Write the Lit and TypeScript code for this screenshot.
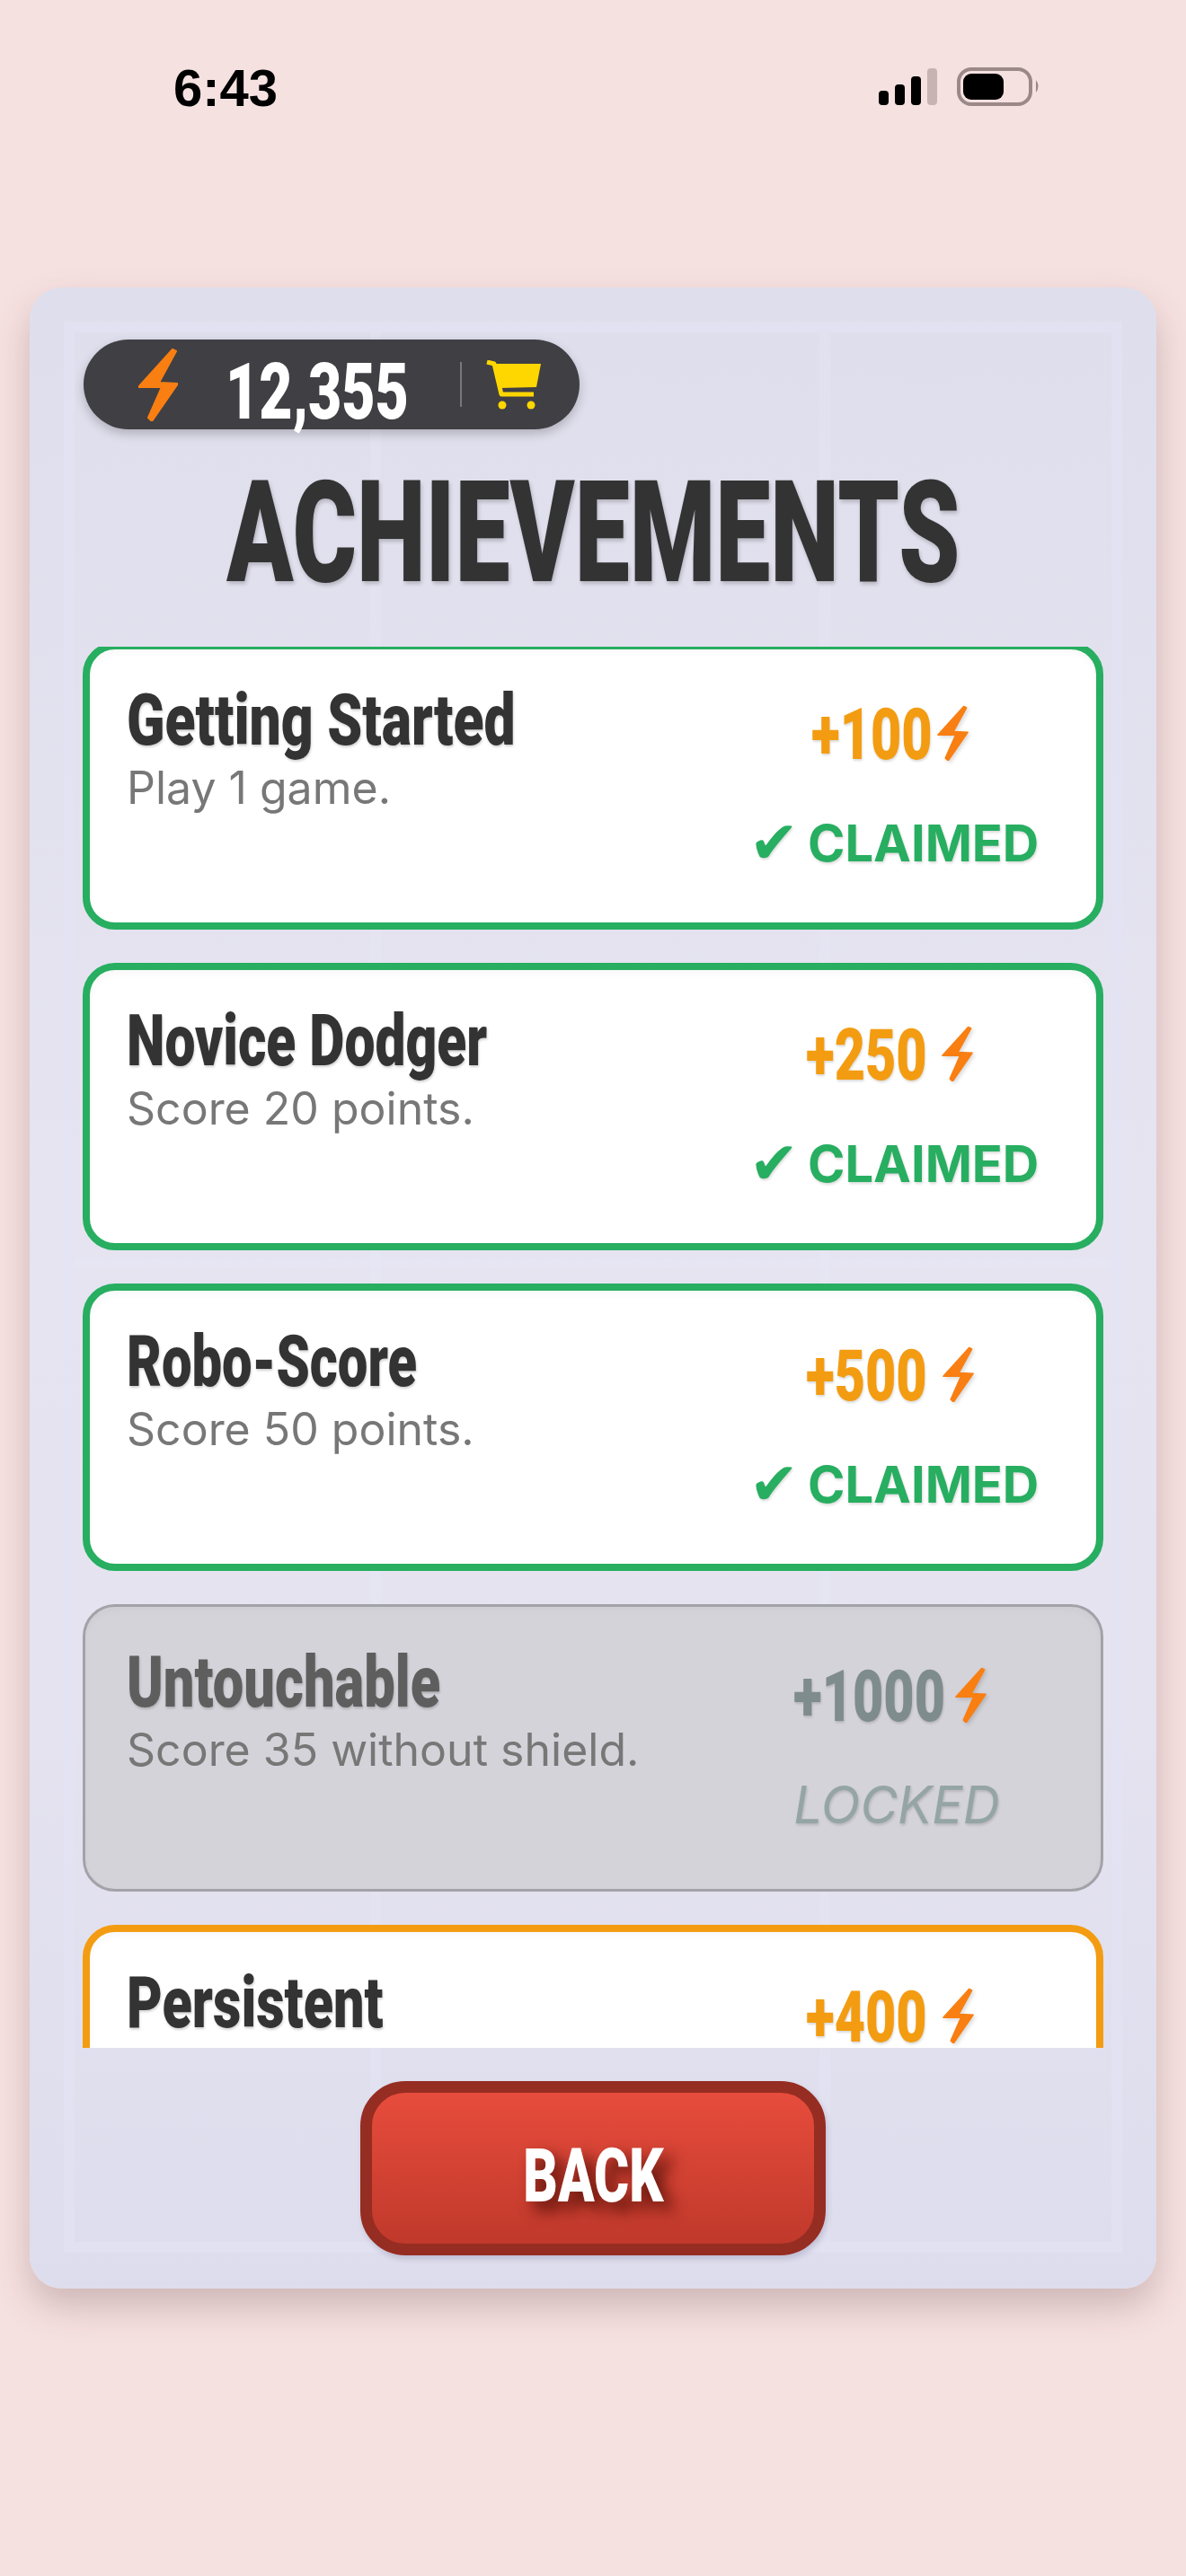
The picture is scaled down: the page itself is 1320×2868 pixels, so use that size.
import { LitElement, html, css, svg, nothing } from "lit";
import { customElement } from "lit/decorators.js";

const bolt = svg`<path d="M38 2 L42 4 L23 39 L44 40 L15 82 L11 78 L26 44 L0 44 Z" fill="#f97f12" stroke="#f97f12" stroke-width="2" stroke-linejoin="round" />`;

type Achievement = {
  name: string;
  nameScale: number;
  desc: string;
  reward: string;
  rewardWidth: number;
  state: "claimed" | "locked" | "ready";
};

const achievements: Achievement[] = [
  { name: "Getting Started", nameScale: 0.78, desc: "Play 1 game.", reward: "+100", rewardWidth: 130, state: "claimed" },
  { name: "Novice Dodger", nameScale: 0.756, desc: "Score 20 points.", reward: "+250", rewardWidth: 141, state: "claimed" },
  { name: "Robo-Score", nameScale: 0.746, desc: "Score 50 points.", reward: "+500", rewardWidth: 142, state: "claimed" },
  { name: "Untouchable", nameScale: 0.768, desc: "Score 35 without shield.", reward: "+1000", rewardWidth: 170, state: "locked" },
  { name: "Persistent", nameScale: 0.765, desc: "Play 10 games.", reward: "+400", rewardWidth: 142, state: "ready" },
];

@customElement("app-root")
export class AppRoot extends LitElement {
  static styles = css`
    :host {
      display: block;
      height: 2868px;
      background: #f6e1e1;
      font-family: Inter, "Liberation Sans", sans-serif;
      overflow: hidden;
    }

    /* no condensed face is installed, so Roboto Black gets squeezed */
    .cond {
      display: inline-block;
      font-family: Roboto, "Liberation Sans", sans-serif;
      font-weight: 900;
      white-space: nowrap;
      transform-origin: left center;
    }

    .status {
      height: 320px;
      box-sizing: border-box;
      padding: 68px 162px 0 193px;
      display: flex;
      justify-content: space-between;
      align-items: flex-start;
    }

    .time {
      font-family: "Liberation Sans", sans-serif;
      font-weight: 700;
      font-size: 58px;
      line-height: 60px;
      color: #000;
    }

    .status svg {
      display: block;
      margin-top: 6px;
    }

    .panel {
      position: relative;
      margin: 0 33px;
      height: 2228px;
      box-sizing: border-box;
      padding: 58px 60px 0;
      border-radius: 36px;
      background: linear-gradient(180deg, #dfdeec 0%, #e6e4f1 45%, #e5e3f0 70%, #dedded 100%);
      box-shadow: 0 20px 40px rgba(70, 30, 30, 0.22);
    }

    .panel::before {
      content: "";
      position: absolute;
      inset: 38px 38px 40px;
      border: 12px solid rgba(228, 228, 245, 0.55);
      background-image: linear-gradient(90deg, rgba(232, 232, 248, 0.28) 12px, transparent 12px),
        linear-gradient(180deg, rgba(232, 232, 248, 0.3) 12px, transparent 12px);
      background-size: 500px 100%, 100% 12px;
      background-position: 329px 0, 0 1030px;
      background-repeat: repeat-x, no-repeat;
      pointer-events: none;
    }

    .panel > * {
      position: relative;
    }

    .pill {
      width: 552px;
      height: 100px;
      box-sizing: border-box;
      padding-left: 61px;
      border-radius: 50px;
      background: #403f44;
      box-shadow: 0 5px 12px rgba(0, 0, 0, 0.22);
      display: flex;
      align-items: center;
    }

    .pill .coins {
      margin-left: 53px;
      width: 258px;
      margin-top: 14px;
      height: 100px;
      line-height: 100px;
      color: #fff;
      font-size: 87px;
    }

    .pill .coins .cond {
      transform: scaleX(0.74);
    }

    .pill .sep {
      width: 2px;
      height: 50px;
      margin: 0 27px 0 3px;
      background: #77777c;
    }

    h1 {
      margin: 40px 0 0;
      height: 202px;
      display: flex;
      justify-content: center;
      font-size: 158px;
      line-height: 150px;
      font-weight: 900;
      color: #333;
      text-shadow: 2px 3px 5px rgba(0, 0, 0, 0.2);
    }

    h1 .cond {
      flex: none;
      transform-origin: center center;
      transform: scaleX(0.69);
    }

    .scroller {
      height: 1560px;
      margin: 0 -1px;
      overflow: hidden;
    }

    .list {
      margin-top: -5px;
      display: flex;
      flex-direction: column;
      gap: 37px;
    }

    .card {
      height: 320px;
      box-sizing: border-box;
      border: 8px solid #27ae60;
      border-radius: 36px;
      background: #fff;
      box-shadow: inset 0 4px 8px rgba(0, 0, 0, 0.03);
      padding: 37px 25px 0 41px;
      display: flex;
      justify-content: space-between;
    }

    .card.ready {
      border-color: #f39c12;
    }

    .card.locked {
      border: 3px solid #a2a2a8;
      padding: 42px 30px 0 46px;
      background: #d4d3d9;
    }

    .info {
      flex: 1;
      min-width: 0;
    }

    .name {
      font-size: 80px;
      line-height: 84px;
      color: #333;
      text-shadow: 1px 2px 3px rgba(0, 0, 0, 0.18);
    }

    .desc {
      margin-top: 5px;
      font-size: 50px;
      line-height: 56px;
      color: #777;
    }

    .locked .name {
      color: #5e5e5e;
    }

    .side {
      width: 400px;
      flex: none;
      display: flex;
      flex-direction: column;
      align-items: center;
    }

    .reward {
      display: flex;
      align-items: center;
      gap: 10px;
      height: 96px;
      margin: 8px 10px 0 0;
      font-size: 79px;
      color: #f39c12;
      text-shadow: 1px 2px 3px rgba(0, 0, 0, 0.15);
    }

    .reward .amount {
      flex: none;
      height: 96px;
      line-height: 96px;
    }

    .reward .amount .cond {
      transform: scaleX(0.75);
    }

    .reward svg {
      filter: drop-shadow(2px 2px 2px rgba(0, 0, 0, 0.15));
    }

    .locked .reward {
      color: #7f8c8d;
    }

    .state {
      margin-top: 43px;
      font-size: 56px;
      line-height: 64px;
      font-weight: 700;
      color: #27ae60;
      white-space: nowrap;
      text-shadow: 1px 2px 3px rgba(0, 0, 0, 0.15);
      display: flex;
      align-items: center;
      gap: 10px;
    }

    .state .tick {
      font-family: "DejaVu Sans", sans-serif;
      font-size: 66px;
      font-weight: 400;
    }

    .locked .state {
      margin-left: 6px;
      font-size: 57px;
      font-weight: 400;
      font-style: italic;
      color: #95a5a6;
    }

    .footer {
      display: flex;
      justify-content: center;
      padding-top: 37px;
    }

    .back {
      width: 518px;
      height: 194px;
      box-sizing: border-box;
      border: 13px solid #962d22;
      border-radius: 50px;
      background: linear-gradient(180deg, #e74c3c 0%, #c0392b 100%);
      box-shadow: 2px 4px 6px rgba(0, 0, 60, 0.15);
      color: #fff;
      padding: 16px 0 0;
      display: flex;
      justify-content: center;
      align-items: center;
    }

    .back .cond {
      font-size: 83px;
      transform-origin: center center;
      transform: scaleX(0.72);
      text-shadow: 14px 10px 20px rgba(70, 10, 5, 0.85);
    }
  `;

  private renderCard(a: Achievement) {
    return html`<div class="card ${a.state}">
      <div class="info">
        <div class="name cond" style="transform:scaleX(${a.nameScale})">${a.name}</div>
        <div class="desc">${a.desc}</div>
      </div>
      <div class="side">
        <div class="reward">
          <div class="amount" style="width:${a.rewardWidth}px"><span class="cond">${a.reward}</span></div>
          <svg width="35" height="62" viewBox="0 0 44 82">${bolt}</svg>
        </div>
        ${a.state === "ready"
          ? nothing
          : a.state === "claimed"
            ? html`<div class="state"><span class="tick">✔</span>CLAIMED</div>`
            : html`<div class="state">LOCKED</div>`}
      </div>
    </div>`;
  }

  render() {
    return html`
      <div class="status">
        <div class="time">6:43</div>
        <svg width="180" height="44" viewBox="0 0 180 44">
          <rect x="0" y="27" width="11" height="16" rx="4" fill="#000" />
          <rect x="18" y="20" width="11" height="23" rx="4" fill="#000" />
          <rect x="36" y="11" width="11" height="32" rx="4" fill="#000" />
          <rect x="54" y="2" width="11" height="41" rx="4" fill="#c8b3b3" />
          <rect x="89" y="3" width="80" height="39" rx="14" fill="none" stroke="#9b8888" stroke-width="4" />
          <rect x="94" y="8" width="45" height="29" rx="9" fill="#000" />
          <path d="M175 15 Q180 22 175 29 Z" fill="#9b8888" />
        </svg>
      </div>
      <div class="panel">
        <div class="pill">
          <svg width="44" height="82" viewBox="0 0 44 82">${bolt}</svg>
          <div class="coins"><span class="cond">12,355</span></div>
          <span class="sep"></span>
          <svg width="61" height="55" viewBox="0 0 61 55">
            <path d="M8 4 H61 L56 30 L15 31 Z" fill="#ffd700" />
            <path d="M1 2 L9 4 L17 38 H53" fill="none" stroke="#ffd700" stroke-width="5" stroke-linejoin="round" />
            <circle cx="18" cy="50" r="4.5" fill="#ffd700" />
            <circle cx="50" cy="50" r="4.5" fill="#ffd700" />
          </svg>
        </div>
        <h1><span class="cond">ACHIEVEMENTS</span></h1>
        <div class="scroller">
          <div class="list">${achievements.map((a) => this.renderCard(a))}</div>
        </div>
        <div class="footer">
          <button class="back" type="button"><span class="cond">BACK</span></button>
        </div>
      </div>
    `;
  }
}
